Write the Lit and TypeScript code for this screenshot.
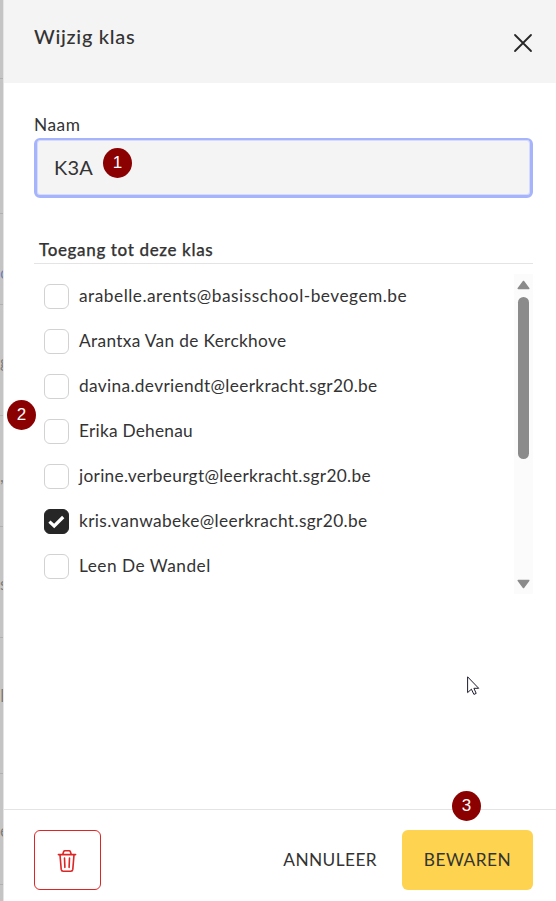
import { LitElement, html, css, svg } from "lit";
import { customElement, state } from "lit/decorators.js";
import { classMap } from "lit/directives/class-map.js";
import { styleMap } from "lit/directives/style-map.js";

interface Person {
  name: string;
  checked: boolean;
  tracking: number;
}

interface BackdropRow {
  height: number;
  text: string;
  top: number;
  link?: boolean;
}

const BACKDROP: BackdropRow[] = [
  { height: 79, text: "", top: 0 },
  { height: 135, text: "", top: 0 },
  { height: 91, text: "c", top: 47, link: true },
  { height: 111, text: "g", top: 45 },
  { height: 111, text: ",", top: 48 },
  { height: 111, text: "s", top: 45 },
  { height: 136, text: "E", top: 46 },
  { height: 111, text: "e", top: 45 },
  { height: 40, text: "", top: 0 },
];

@customElement("step-badge")
class StepBadge extends LitElement {
  static styles = css`
    :host {
      position: absolute;
      width: 29px;
      height: 30px;
      border-radius: 50%;
      background: #8b0000;
      color: #fff;
      font: 17px/29px "Liberation Sans", Arial, sans-serif;
      text-align: center;
    }
  `;
  render() {
    return html`<slot></slot>`;
  }
}

@customElement("person-option")
class PersonOption extends LitElement {
  static properties = { person: { attribute: false } };
  declare person: Person;

  static styles = css`
    :host {
      display: flex;
      align-items: center;
      height: 45px;
      gap: 10px;
    }
    .box {
      box-sizing: border-box;
      width: 25px;
      height: 25px;
      flex: none;
      border: 1px solid #d2d2d2;
      border-radius: 6px;
      background: #fff;
    }
    .box.on {
      background: #262626;
      border-color: #262626;
    }
    svg {
      display: block;
      width: 23px;
      height: 23px;
    }
    .name {
      padding-bottom: 2px;
      white-space: nowrap;
    }
  `;
  render() {
    const p = this.person;
    return html`
      <span class=${classMap({ box: true, on: p.checked })}>
        ${p.checked
          ? html`<svg viewBox="0 0 23 23" fill="none">
              ${svg`<path d="M4.4 11.6 9.2 16 18.2 7" stroke="#fff" stroke-width="3.2" />`}
            </svg>`
          : ""}
      </span>
      <span class="name" style=${styleMap({ letterSpacing: `${p.tracking}px` })}>${p.name}</span>
    `;
  }
}

@customElement("app-root")
class AppRoot extends LitElement {
  @state() private people: Person[] = [
    { name: "arabelle.arents@basisschool-bevegem.be", checked: false, tracking: 0.5 },
    { name: "Arantxa Van de Kerckhove", checked: false, tracking: 0.34 },
    { name: "davina.devriendt@leerkracht.sgr20.be", checked: false, tracking: 0.34 },
    { name: "Erika Dehenau", checked: false, tracking: 0.24 },
    { name: "jorine.verbeurgt@leerkracht.sgr20.be", checked: false, tracking: 0.31 },
    { name: "kris.vanwabeke@leerkracht.sgr20.be", checked: true, tracking: 0.38 },
    { name: "Leen De Wandel", checked: false, tracking: 0.49 },
  ];

  static styles = css`
    :host {
      display: flex;
      position: relative;
      width: 556px;
      height: 901px;
      overflow: hidden;
      background: #fff;
      color: #333;
      font-family: Lato, "Noto Sans", sans-serif;
      font-size: 17.3px;
    }
    * {
      box-sizing: border-box;
    }
    .backdrop {
      flex: none;
      width: 4px;
      height: 901px;
      overflow: hidden;
      background: #c4c4c4;
      border-right: 1px solid #e4e4e4;
      color: #7d7d7d;
      font-size: 17px;
      line-height: 24px;
    }
    .backdrop-row {
      border-bottom: 1px solid #b0b0b0;
      overflow: hidden;
    }
    .link {
      color: #7183b4;
    }
    .panel {
      flex: 1;
      display: flex;
      flex-direction: column;
      min-width: 0;
    }
    header {
      display: flex;
      justify-content: space-between;
      height: 83px;
      padding: 21px 23px 0 30px;
      background: #f4f4f4;
    }
    h1 {
      margin: 0;
      font-size: 20px;
      line-height: 30px;
      font-weight: 500;
      letter-spacing: 0.7px;
    }
    .close {
      width: 20px;
      height: 20px;
      margin-top: 12px;
    }
    main {
      flex: 1;
      padding: 30px 23px 0 30px;
    }
    label {
      display: block;
      height: 25px;
      line-height: 24px;
      letter-spacing: 0.55px;
    }
    .field {
      height: 60px;
      padding: 0 17px;
      border: 3px solid #a5b4fc;
      border-width: 2px 3px 3px;
      border-radius: 6px;
      background: #f4f4f4;
      font-size: 20px;
      line-height: 54px;
      letter-spacing: 0.2px;
      box-shadow: inset 0 0 0 1px #d5dbf9;
    }
    h2 {
      margin: 40px 0 0;
      height: 26px;
      padding-left: 5px;
      border-bottom: 1px solid #e4e4e4;
      font-size: 17px;
      line-height: 23px;
      font-weight: 500;
      letter-spacing: 0.64px;
      -webkit-text-stroke: 0.25px currentColor;
    }
    .list {
      display: flex;
      justify-content: space-between;
      height: 320px;
      margin-top: 10px;
      padding-left: 10px;
    }
    .scroll {
      display: flex;
      flex-direction: column;
      align-items: center;
      width: 19px;
      height: 320px;
      background: #fbfbfb;
    }
    .scroll svg {
      width: 13px;
      height: 10px;
      margin: 6px 0 7px;
    }
    .scroll svg:last-child {
      margin-bottom: 5px;
    }
    .thumb {
      width: 11px;
      height: 162px;
      border-radius: 6px;
      background: #8b8b8b;
    }
    .gap {
      flex: 1;
    }
    footer {
      display: flex;
      align-items: flex-start;
      height: 92px;
      padding: 20px 23px 0 30px;
      border-top: 1px solid #e4e4e4;
    }
    .btn {
      display: flex;
      align-items: center;
      justify-content: center;
      height: 60px;
      border-radius: 6px;
      white-space: nowrap;
    }
    .delete {
      width: 67px;
      padding: 1px 1px 0 0;
      border: 1px solid #dc2626;
    }
    .cancel {
      margin-left: auto;
      margin-right: 25px;
      padding-bottom: 2px;
      letter-spacing: 0.4px;
    }
    .save {
      width: 131px;
      padding-bottom: 2px;
      background: #fdd34f;
      letter-spacing: 0.5px;
    }
    .b1 {
      left: 103px;
      top: 148px;
    }
    .b2 {
      left: 7px;
      top: 400px;
    }
    .b3 {
      left: 452px;
      top: 791px;
    }
    .cursor {
      position: absolute;
      left: 467px;
      top: 676px;
      width: 13px;
      height: 20px;
    }
  `;

  render() {
    return html`
      <div class="backdrop">
        ${BACKDROP.map(
          (r) => html`<div
            class=${classMap({ "backdrop-row": true, link: !!r.link })}
            style=${styleMap({ height: `${r.height}px`, paddingTop: `${r.top}px` })}
          >${r.text}</div>`
        )}
      </div>
      <div class="panel">
        <header>
          <h1>Wijzig klas</h1>
          <svg class="close" viewBox="0 0 20 20" fill="none" stroke="#262626" stroke-width="1.8" stroke-linecap="round">
            <path d="M2 2 18 18M18 2 2 18" />
          </svg>
        </header>
        <main>
          <label>Naam</label>
          <div class="field">K3A</div>
          <h2>Toegang tot deze klas</h2>
          <div class="list">
            <div>${this.people.map((p) => html`<person-option .person=${p}></person-option>`)}</div>
            <div class="scroll">
              <svg viewBox="0 0 13 10"><path d="M6.5 1.5 11.7 8.5H1.3Z" fill="#8b8b8b" stroke="#8b8b8b" stroke-width="1.6" stroke-linejoin="round" /></svg>
              <div class="thumb"></div>
              <div class="gap"></div>
              <svg viewBox="0 0 13 10"><path d="M6.5 8.5 11.7 1.5H1.3Z" fill="#8b8b8b" stroke="#8b8b8b" stroke-width="1.6" stroke-linejoin="round" /></svg>
            </div>
          </div>
        </main>
        <footer>
          <div class="btn delete">
            <svg width="20" height="24" viewBox="0 0 20 24" fill="none" stroke="#dc2626" stroke-width="1.6" stroke-linecap="round" stroke-linejoin="round">
              <path d="M1.4 5.6H18.6M3 5.8 4.2 20.4Q4.4 22.2 6.2 22.2H13.8Q15.6 22.2 15.8 20.4L17 5.8M5.8 5.2 6.6 2.7Q6.9 1.8 7.9 1.8H12.1Q13.1 1.8 13.4 2.7L14.2 5.2M7.5 9 7.9 18.4M12.5 9 12.1 18.4" />
            </svg>
          </div>
          <div class="btn cancel">ANNULEER</div>
          <div class="btn save">BEWAREN</div>
        </footer>
      </div>
      <step-badge class="b1">1</step-badge>
      <step-badge class="b2">2</step-badge>
      <step-badge class="b3">3</step-badge>
      <svg class="cursor" viewBox="0 0 13 20">
        <path d="M.6.8V16.6L4.4 13.2 6.9 18.4 9.2 17.4 6.9 12.3H11.7Z" fill="#fff" stroke="#1c1c2c" stroke-width="1" />
      </svg>
    `;
  }
}
